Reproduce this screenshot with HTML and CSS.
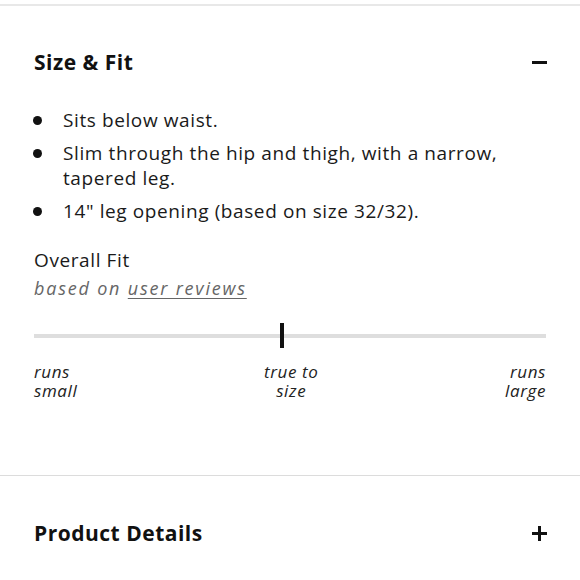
FILE: index.html
```html
<!DOCTYPE html>
<html lang="en">
<head>
<meta charset="utf-8">
<title>Size &amp; Fit</title>
<link rel="stylesheet" href="styles.css">
</head>
<body>
<div class="topline"></div>
<section class="panel open">
  <div class="panel-head">
    <h2 class="panel-title">Size &amp; Fit</h2>
    <span class="toggle minus" aria-hidden="true"></span>
  </div>
  <ul class="bullets">
    <li>Sits below waist.</li>
    <li>Slim through the hip and thigh, with a narrow, tapered leg.</li>
    <li>14" leg opening (based on size 32/32).</li>
  </ul>
  <div class="fit">
    <div class="fit-title">Overall Fit</div>
    <div class="fit-sub">based on <a href="#" class="fit-link">user reviews</a></div>
    <div class="track">
      <span class="marker" style="left: 48%"></span>
    </div>
    <div class="scale">
      <span class="scale-left">runs<br>small</span>
      <span class="scale-mid">true to<br>size</span>
      <span class="scale-right">runs<br>large</span>
    </div>
  </div>
</section>
<section class="panel closed">
  <div class="panel-head">
    <h2 class="panel-title">Product Details</h2>
    <span class="toggle plus" aria-hidden="true"></span>
  </div>
</section>
</body>
</html>
```

FILE: styles.css
```css
html, body {
  margin: 0;
  padding: 0;
  background: #fff;
}
body {
  font-family: "Open Sans", "Noto Sans", sans-serif;
  color: #111;
  width: 580px;
}
.topline {
  margin-top: 4px;
  height: 2px;
  background: #e8e8e8;
}
.panel {
  padding: 0 34px;
}
.panel.open {
  padding-top: 42px;
  padding-bottom: 75px;
  border-bottom: 1.5px solid #dcdcdc;
}
.panel.closed {
  padding-top: 43px;
}
.panel-head {
  display: flex;
  align-items: center;
  justify-content: space-between;
  height: 28px;
}
.panel-title {
  margin: 0;
  font-size: 21px;
  line-height: 28px;
  font-weight: 700;
  letter-spacing: 0.5px;
  color: #111;
}
.toggle {
  position: relative;
  width: 15px;
  height: 15px;
  margin-right: -1px;
}
.toggle::before,
.toggle::after {
  content: "";
  position: absolute;
  background: #111;
}
.toggle::before {
  left: 0;
  right: 0;
  top: 6px;
  height: 3px;
}
.plus::after {
  top: 0;
  bottom: 0;
  left: 6px;
  width: 3px;
}
.minus::after {
  display: none;
}
.bullets {
  list-style: none;
  margin: 32px 0 0;
  padding: 0;
  font-size: 19px;
  line-height: 25px;
  letter-spacing: 0.6px;
  color: #1a1a1a;
}
.bullets li {
  display: flex;
  margin-bottom: 8px;
}
.bullets li::before {
  content: "";
  flex: none;
  width: 9px;
  height: 9px;
  border-radius: 50%;
  background: #111;
  margin: 8px 21px 0 -1px;
}
.fit {
  margin-top: 23px;
}
.fit-title {
  font-size: 19px;
  line-height: 26px;
  letter-spacing: 0.6px;
  color: #1a1a1a;
}
.fit-sub {
  margin-top: 2px;
  font-size: 18px;
  line-height: 26px;
  font-style: italic;
  letter-spacing: 1.8px;
  color: #666;
}
.fit-link {
  color: #666;
  text-decoration: underline;
  text-underline-offset: 3px;
}
.track {
  position: relative;
  margin-top: 33px;
  height: 4px;
  background: #dedede;
}
.marker {
  position: absolute;
  top: -11px;
  width: 4px;
  height: 25px;
  background: #111;
}
.scale {
  display: flex;
  justify-content: space-between;
  margin-top: 24px;
  font-size: 17px;
  line-height: 19px;
  font-style: italic;
  letter-spacing: 0.6px;
  color: #222;
}
.scale-left { text-align: left; }
.scale-mid { text-align: center; }
.scale-right { text-align: right; }
```
